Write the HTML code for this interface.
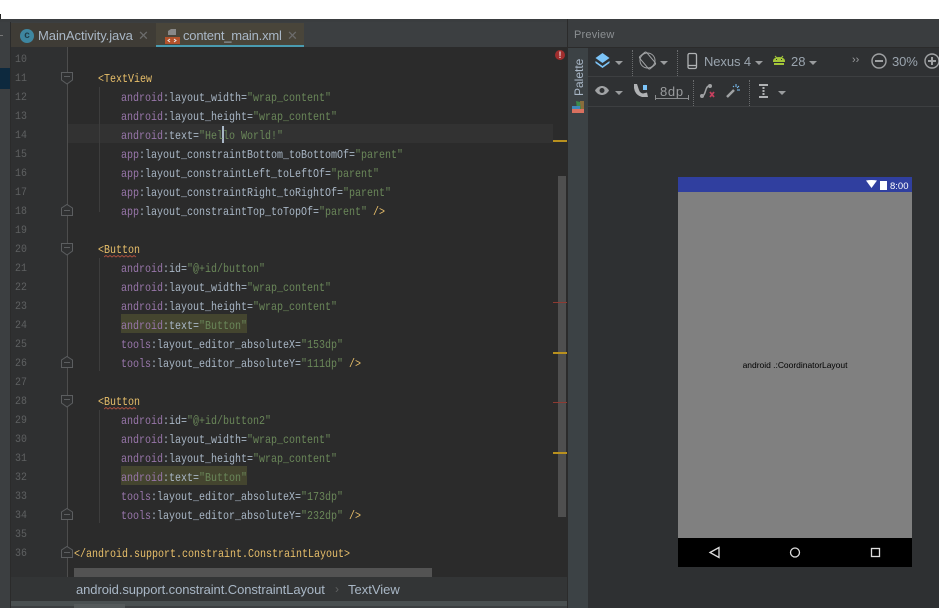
<!DOCTYPE html>
<html><head><meta charset="utf-8"><style>
html,body{margin:0;padding:0;background:#fff}
#r{position:relative;width:939px;height:608px;overflow:hidden;background:#fff;font-family:"Liberation Sans",sans-serif}
.a{position:absolute}
.n{position:absolute;left:15px;width:20px;margin-top:1px;font:11px/19px "Liberation Mono",monospace;color:#5f6162;transform:scaleX(.9);transform-origin:left}
.l{position:absolute;white-space:pre;margin-top:1px;font:12px/19px "Liberation Mono",monospace;color:#a9b7c6;transform:scaleX(.8333);transform-origin:left}
.p{color:#9876aa}.s{color:#6a8759}.t{color:#e8bf6a}
.u{position:absolute;color:#a9b7c6;font-size:13px;white-space:pre}
.d{position:absolute;width:0;height:0;border-left:4px solid transparent;border-right:4px solid transparent;border-top:4px solid #9a9c9e}
.v{position:absolute;width:0;border-left:1px dotted #6a6c6e}
</style></head><body><div id="r">
<div class="a" style="left:0;top:14px;width:1px;height:5px;background:#222"></div>
<div class="a" style="left:0;top:19px;width:939px;height:589px;background:#3c3f41"></div>
<div class="a" style="left:0;top:19px;width:939px;height:3px;background:#3a3d3f"></div>
<div class="a" style="left:10px;top:22px;width:1px;height:586px;background:#2b2b2b"></div>
<div class="a" style="left:0;top:68px;width:10px;height:21px;background:#0d293e"></div>
<div class="a" style="left:0;top:35px;width:3px;height:1px;background:#777"></div>

<!-- tabs -->
<div class="a" style="left:11px;top:23px;width:145px;height:24px;background:#3f3c36"></div>
<div class="a" style="left:156px;top:23px;width:148px;height:22px;background:#49453a"></div>
<div class="a" style="left:156px;top:45px;width:148px;height:3px;background:#4a9bb0"></div>
<div class="a" style="left:20px;top:29px;width:14px;height:14px;border-radius:50%;background:#3e86a0;color:#1f3c48;font:bold 10px/14px 'Liberation Sans';text-align:center">c</div>
<div class="u" style="left:38px;top:28px;color:#a9b7c6;letter-spacing:-.06px">MainActivity.java</div>
<div class="u" style="left:138px;top:28px;color:#6c6c6c">✕</div>
<svg class="a" style="left:165px;top:28px" width="16" height="17"><path d="M3 7V3L6 1H11V7Z" fill="#888"/><rect x="0" y="9" width="15" height="7" fill="#b4522b"/><path d="M5 11l-2 1.500 2 1.500M9 11l2 1.500-2 1.500" stroke="#eee" fill="none"/></svg>
<div class="u" style="left:183px;top:28px;color:#a9b7c6;letter-spacing:-.2px">content_main.xml</div>
<div class="u" style="left:287px;top:28px;color:#6c6c6c">✕</div>

<!-- editor -->
<div class="a" style="left:11px;top:47px;width:556px;height:530px;background:#2b2b2b"></div>
<div class="a" style="left:11px;top:47px;width:56px;height:530px;background:#2f3031"></div>
<div class="a" style="left:67px;top:124px;width:486px;height:19px;background:#323232"></div>
<div class="a" style="left:67px;top:47px;width:1px;height:530px;background:#4d4d4d"></div>
<div class="a" style="left:99px;top:87px;width:1px;height:125px;background:#3d3d3d"></div>
<div class="a" style="left:99px;top:258px;width:1px;height:113px;background:#3d3d3d"></div>
<div class="a" style="left:99px;top:410px;width:1px;height:113px;background:#3d3d3d"></div>
<div class="a" style="left:121px;top:314px;width:126px;height:19px;background:#44452f"></div>
<div class="a" style="left:121px;top:466px;width:126px;height:19px;background:#44452f"></div>
<div class="a" style="left:222px;top:126px;width:2px;height:17px;background:#a9b7c6"></div>

<svg class="a" style="left:60px;top:47px" width="14" height="530" fill="#2f3031" stroke="#5c5e60">
<path d="M1.500 25.500H12.500V33L7 37 1.500 33Z"/><path d="M4 29.500H10"/>
<path d="M1.500 168.500H12.500V161L7 157.500 1.500 161Z"/><path d="M4 163.500H10"/>
<path d="M1.500 196.500H12.500V204L7 208 1.500 204Z"/><path d="M4 200.500H10"/>
<path d="M1.500 320.500H12.500V313L7 309.500 1.500 313Z"/><path d="M4 315.500H10"/>
<path d="M1.500 348.500H12.500V356L7 360 1.500 356Z"/><path d="M4 352.500H10"/>
<path d="M1.500 472.500H12.500V465L7 461.500 1.500 465Z"/><path d="M4 467.500H10"/>
<path d="M1.500 510.500H12.500V503L7 499.500 1.500 503Z"/><path d="M4 505.500H10"/>
</svg>

<div class="n" style="top:50px">10</div><div class="n" style="top:69px">11</div><div class="n" style="top:88px">12</div><div class="n" style="top:107px">13</div><div class="n" style="top:126px">14</div><div class="n" style="top:145px">15</div><div class="n" style="top:164px">16</div><div class="n" style="top:183px">17</div><div class="n" style="top:202px">18</div><div class="n" style="top:221px">19</div><div class="n" style="top:240px">20</div><div class="n" style="top:259px">21</div><div class="n" style="top:278px">22</div><div class="n" style="top:297px">23</div><div class="n" style="top:316px">24</div><div class="n" style="top:335px">25</div><div class="n" style="top:354px">26</div><div class="n" style="top:373px">27</div><div class="n" style="top:392px">28</div><div class="n" style="top:411px">29</div><div class="n" style="top:430px">30</div><div class="n" style="top:449px">31</div><div class="n" style="top:468px">32</div><div class="n" style="top:487px">33</div><div class="n" style="top:506px">34</div><div class="n" style="top:525px">35</div><div class="n" style="top:544px">36</div>

<div class="l t" style="left:98px;top:69px">&lt;TextView</div>
<div class="l" style="left:121px;top:88px"><span class="p">android</span>:layout_width=<span class="s">"wrap_content"</span></div>
<div class="l" style="left:121px;top:107px"><span class="p">android</span>:layout_height=<span class="s">"wrap_content"</span></div>
<div class="l" style="left:121px;top:126px"><span class="p">android</span>:text=<span class="s">"Hello World!"</span></div>
<div class="l" style="left:120.500px;top:145px"><span class="p">app</span>:layout_constraintBottom_toBottomOf=<span class="s">"parent"</span></div>
<div class="l" style="left:120.500px;top:164px"><span class="p">app</span>:layout_constraintLeft_toLeftOf=<span class="s">"parent"</span></div>
<div class="l" style="left:120.500px;top:183px"><span class="p">app</span>:layout_constraintRight_toRightOf=<span class="s">"parent"</span></div>
<div class="l" style="left:120.500px;top:202px"><span class="p">app</span>:layout_constraintTop_toTopOf=<span class="s">"parent"</span> <span class="t">/&gt;</span></div>
<div class="l t" style="left:98px;top:240px">&lt;Button</div>
<div class="l" style="left:121px;top:259px"><span class="p">android</span>:id=<span class="s">"@+id/button"</span></div>
<div class="l" style="left:121px;top:278px"><span class="p">android</span>:layout_width=<span class="s">"wrap_content"</span></div>
<div class="l" style="left:121px;top:297px"><span class="p">android</span>:layout_height=<span class="s">"wrap_content"</span></div>
<div class="l" style="left:121px;top:316px"><span class="p">android</span>:text=<span class="s">"Button"</span></div>
<div class="l" style="left:121px;top:335px"><span class="p">tools</span>:layout_editor_absoluteX=<span class="s">"153dp"</span></div>
<div class="l" style="left:121px;top:354px"><span class="p">tools</span>:layout_editor_absoluteY=<span class="s">"111dp"</span> <span class="t">/&gt;</span></div>
<div class="l t" style="left:98px;top:392px">&lt;Button</div>
<div class="l" style="left:121px;top:411px"><span class="p">android</span>:id=<span class="s">"@+id/button2"</span></div>
<div class="l" style="left:121px;top:430px"><span class="p">android</span>:layout_width=<span class="s">"wrap_content"</span></div>
<div class="l" style="left:121px;top:449px"><span class="p">android</span>:layout_height=<span class="s">"wrap_content"</span></div>
<div class="l" style="left:121px;top:468px"><span class="p">android</span>:text=<span class="s">"Button"</span></div>
<div class="l" style="left:121px;top:487px"><span class="p">tools</span>:layout_editor_absoluteX=<span class="s">"173dp"</span></div>
<div class="l" style="left:121px;top:506px"><span class="p">tools</span>:layout_editor_absoluteY=<span class="s">"232dp"</span> <span class="t">/&gt;</span></div>
<div class="l t" style="left:74px;top:544px">&lt;/android.support.constraint.ConstraintLayout&gt;</div>

<svg class="a" style="left:104px;top:255px" width="36" height="3"><path d="M0 2l2-1.500 2 1.500 2-1.500 2 1.500 2-1.500 2 1.500 2-1.500 2 1.500 2-1.500 2 1.500 2-1.500 2 1.500 2-1.500 2 1.500 2-1.500 2 1.500" stroke="#a8503f" fill="none"/></svg>
<svg class="a" style="left:104px;top:407px" width="36" height="3"><path d="M0 2l2-1.500 2 1.500 2-1.500 2 1.500 2-1.500 2 1.500 2-1.500 2 1.500 2-1.500 2 1.500 2-1.500 2 1.500 2-1.500 2 1.500 2-1.500 2 1.500" stroke="#a8503f" fill="none"/></svg>

<!-- markers -->
<div class="a" style="left:558px;top:176px;width:8px;height:341px;background:#4f4f4f"></div>
<div class="a" style="left:553px;top:140px;width:14px;height:2px;background:#b8901e"></div>
<div class="a" style="left:553px;top:352px;width:14px;height:2px;background:#b8901e"></div>
<div class="a" style="left:553px;top:452px;width:14px;height:2px;background:#b8901e"></div>
<div class="a" style="left:553px;top:302px;width:14px;height:1px;background:#8e3a32"></div>
<div class="a" style="left:553px;top:402px;width:14px;height:1px;background:#8e3a32"></div>
<div class="a" style="left:555px;top:50px;width:10px;height:10px;border-radius:50%;background:#a02d2d;color:#e8d0d0;font:bold 9px/10px 'Liberation Sans';text-align:center">!</div>

<!-- bottom -->
<div class="a" style="left:74px;top:568px;width:358px;height:9px;background:#535353"></div>
<div class="a" style="left:11px;top:577px;width:556px;height:24px;background:#333536"></div>
<div class="a" style="left:11px;top:601px;width:556px;height:5px;background:#4a5051"></div>
<div class="a" style="left:11px;top:606px;width:556px;height:2px;background:#3c3f41"></div>
<div class="a" style="left:74px;top:604px;width:51px;height:4px;background:#54595a"></div>
<div class="u" style="left:76px;top:582px;font-size:13px;letter-spacing:-.08px">android.support.constraint.ConstraintLayout</div>
<div class="u" style="left:335px;top:582px;color:#5f6162;font-size:12px">›</div>
<div class="u" style="left:348px;top:582px;font-size:13px">TextView</div>

<!-- preview -->
<div class="a" style="left:567px;top:19px;width:1px;height:589px;background:#2b2b2b"></div>
<div class="a" style="left:568px;top:22px;width:371px;height:25px;background:#3a3d3f"></div>
<div class="u" style="left:574px;top:29px;font-size:11px;color:#8b8f92;letter-spacing:.2px">Preview</div>
<div class="a" style="left:568px;top:47px;width:371px;height:1px;background:#2b2b2b"></div>
<div class="a" style="left:568px;top:48px;width:20px;height:560px;background:#3c4245"></div>
<div class="a" style="left:588px;top:48px;width:351px;height:560px;background:#2f3133"></div>
<div class="a" style="left:588px;top:76px;width:351px;height:1px;background:#3d3f41"></div>
<div class="a" style="left:588px;top:106px;width:351px;height:1px;background:#3d3f41"></div>
<div class="a" style="left:588px;top:107px;width:351px;height:501px;background:#2e3032"></div>

<div class="a" style="left:572px;top:96px;width:60px;height:14px;font-size:12px;line-height:14px;color:#a9b7c6;transform:rotate(-90deg);transform-origin:0 0">Palette</div>
<svg class="a" style="left:571px;top:99px" width="14" height="15"><path d="M9 2h4v9H9z" fill="#8a6d3b"/><path d="M5 2l4 1 1 7H6z" fill="#3d8a4a"/><path d="M1 7h8v4H1z" fill="#3f86b8"/><rect x="1" y="10" width="12" height="4" fill="#d9705f"/></svg>

<!-- toolbar row 1 -->
<svg class="a" style="left:594px;top:52px" width="18" height="18"><path d="M8.500 1l7 5-7 5-7-5z" fill="#7cc4f8"/><path d="M1.500 9l7 5 7-5v2l-7 5-7-5z" fill="#7cc4f8"/></svg>
<div class="d" style="left:615px;top:61px"></div>
<div class="v" style="left:632px;top:50px;height:26px"></div>
<svg class="a" style="left:638px;top:51px" width="19" height="19" fill="none" stroke="#a0a2a4"><circle cx="9.500" cy="9.500" r="7.500"/><rect x="5" y="1.500" width="9" height="16" rx="1.500" transform="rotate(-40 9.500 9.500)"/></svg>
<div class="d" style="left:660px;top:61px"></div>
<div class="v" style="left:677px;top:50px;height:26px"></div>
<svg class="a" style="left:686px;top:52px" width="14" height="18" fill="none" stroke="#b0b2b4" stroke-width="1.300"><rect x="2" y="1.500" width="8.500" height="15" rx="1.500"/><path d="M2 13.500h8.500"/></svg>
<div class="u" style="left:704px;top:54px;font-size:13px;color:#9aa4ae;letter-spacing:-.1px">Nexus 4</div>
<div class="d" style="left:755px;top:61px"></div>
<svg class="a" style="left:772px;top:55px" width="14" height="12"><path d="M3 1l2 2M11 1L9 3" stroke="#a4c639"/><path d="M1 6a6 4 0 0 1 12 0v1H1zM2 8h10v2H2z" fill="#a4c639"/><rect x="4" y="4" width="1" height="1" fill="#2f3133"/><rect x="9" y="4" width="1" height="1" fill="#2f3133"/></svg>
<div class="u" style="left:791px;top:54px;font-size:13px;color:#9aa4ae">28</div>
<div class="d" style="left:809px;top:61px"></div>
<div class="u" style="left:852px;top:54px;font-size:11px;color:#9a9c9e">››</div>
<svg class="a" style="left:870px;top:52px" width="18" height="18" fill="none" stroke="#a0a2a4" stroke-width="1.400"><circle cx="9" cy="9" r="7"/><path d="M5 9h8" stroke-width="2"/></svg>
<div class="u" style="left:892px;top:54px;font-size:13px;color:#9aa4ae;letter-spacing:-.1px">30%</div>
<svg class="a" style="left:923px;top:52px" width="16" height="18" fill="none" stroke="#a0a2a4" stroke-width="1.400"><circle cx="9" cy="9" r="7"/><path d="M5 9h8M9 5v8" stroke-width="2"/></svg>

<!-- toolbar row 2 -->
<svg class="a" style="left:594px;top:84px" width="16" height="14"><path d="M1 6.500C3 3 6 2 8 2s5 1 7 4.500C13 10 10 11 8 11S3 10 1 6.500z" fill="#a0a2a4"/><circle cx="8" cy="6.500" r="2.500" fill="#2f3133"/></svg>
<div class="d" style="left:615px;top:91px"></div>
<svg class="a" style="left:633px;top:83px" width="16" height="16"><path d="M1 1H4L6 7Q7 10 10 10.500L14 9.500 15 14H9Q2 12 1 5Z" fill="#b0b2b4"/><rect x="10" y="2" width="4" height="5" fill="#7cc4f8"/></svg>
<div class="u" style="left:660px;top:84px;font-size:13px;color:#9a9c9e;letter-spacing:.7px">8dp</div>
<div class="a" style="left:655px;top:98px;width:33px;height:1px;background:#8a8c8e"></div>
<div class="a" style="left:655px;top:95px;width:1px;height:5px;background:#8a8c8e"></div>
<div class="a" style="left:688px;top:95px;width:1px;height:5px;background:#8a8c8e"></div>
<div class="v" style="left:693px;top:80px;height:26px"></div>
<svg class="a" style="left:699px;top:83px" width="18" height="16" fill="none"><path d="M3 13C7 13 6 3 10 3" stroke="#a0a2a4" stroke-width="1.500"/><circle cx="3" cy="13" r="2" fill="#a0a2a4"/><circle cx="11" cy="3" r="2" fill="#a0a2a4"/><path d="M11 9l4 5M15 9l-4 5" stroke="#c7405f" stroke-width="1.800"/></svg>
<svg class="a" style="left:725px;top:83px" width="16" height="16" fill="none"><path d="M2 14l7-7" stroke="#a0a2a4" stroke-width="2.500"/><path d="M11 1v3M14 3l-2 2M15 7h-3M8 3l1 1" stroke="#7cc4f8"/></svg>
<div class="v" style="left:749px;top:80px;height:26px"></div>
<svg class="a" style="left:759px;top:84px" width="11" height="14" fill="#b0b2b4"><rect x="0" y="0" width="9" height="2"/><rect x="0" y="12" width="9" height="2"/><rect x="3.500" y="3" width="2" height="2"/><rect x="3.500" y="6" width="2" height="2"/><rect x="3.500" y="9" width="2" height="2"/></svg>
<div class="d" style="left:778px;top:91px"></div>

<!-- phone -->
<div class="a" style="left:678px;top:177px;width:234px;height:15px;background:#303f9f"></div>
<div class="a" style="left:678px;top:192px;width:234px;height:346px;background:#808080"></div>
<div class="a" style="left:678px;top:538px;width:234px;height:29px;background:#000"></div>
<svg class="a" style="left:866px;top:180px" width="22" height="10" fill="#fff"><path d="M0 .500Q5.500-.500 11 .500L5.500 8z"/><rect x="14" y="1" width="7" height="9"/></svg>
<div class="a" style="left:890px;top:181px;font:9.500px/11px 'Liberation Sans';color:#fff">8:00</div>
<div class="a" style="left:678px;top:359px;width:234px;text-align:center;font:8.500px/12px 'Liberation Sans';color:#000;letter-spacing:-.02px">android .:CoordinatorLayout</div>
<svg class="a" style="left:705px;top:544px" width="180" height="17" fill="none" stroke="#ddd" stroke-width="1.300"><path d="M5 8.500L14 3.500V13.500Z"/><circle cx="90" cy="8.500" r="4.500"/><rect x="166.500" y="4.500" width="8" height="8"/></svg>
</div></body></html>
